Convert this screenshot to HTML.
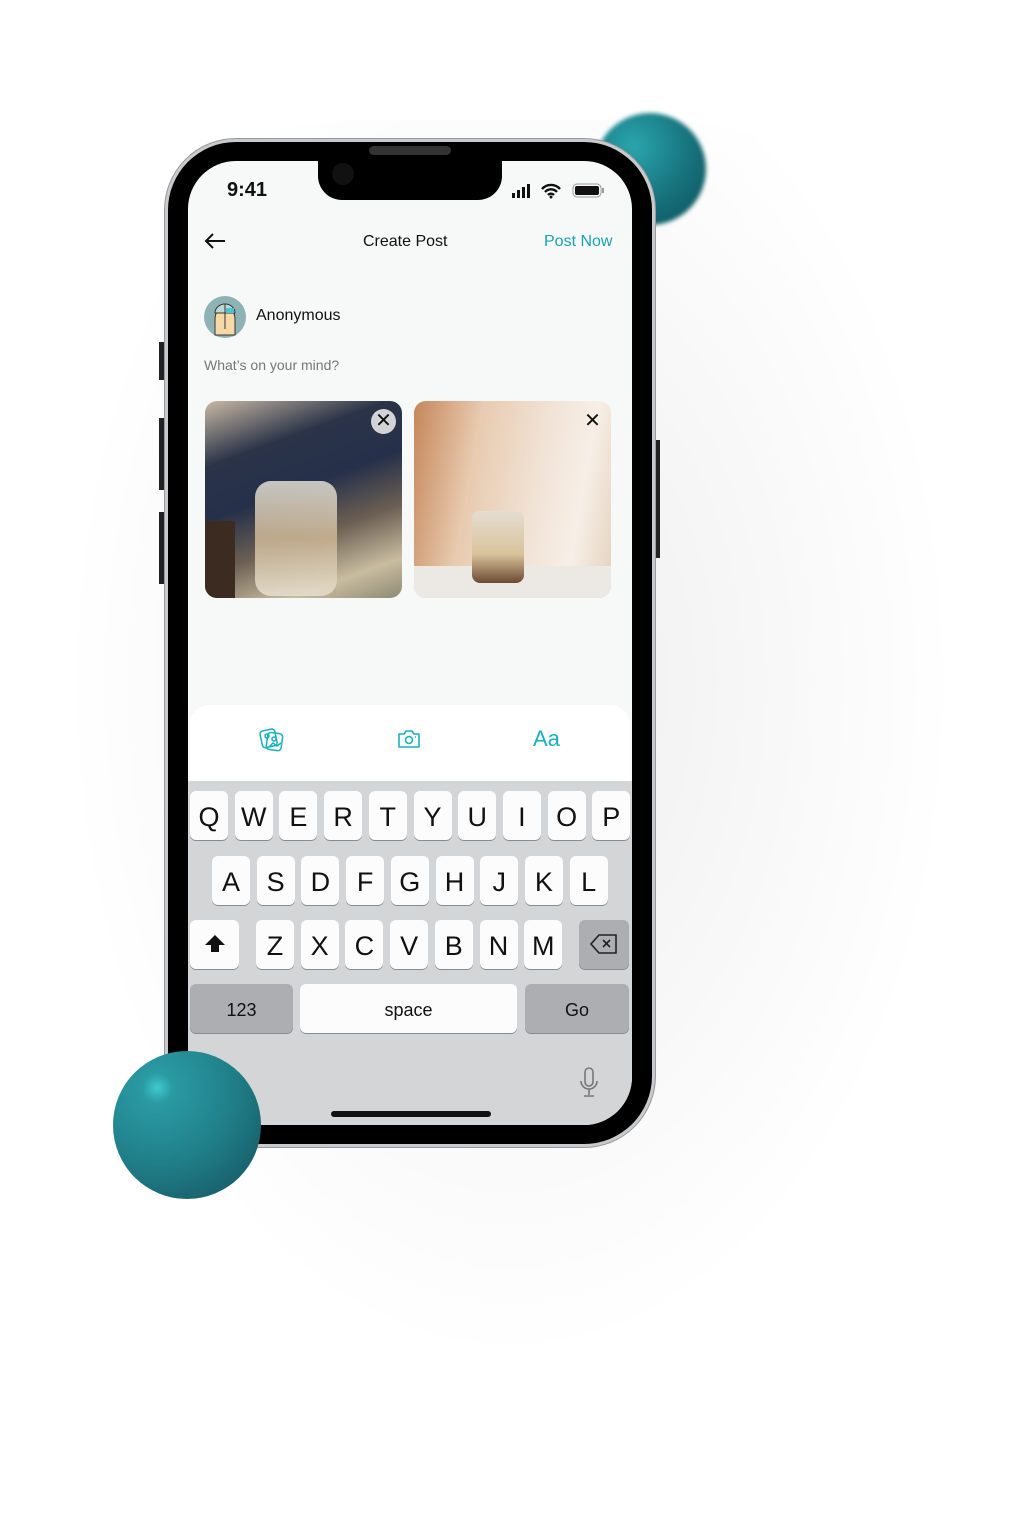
<!DOCTYPE html>
<html><head><meta charset="utf-8"><style>
*{margin:0;padding:0;box-sizing:border-box}
body{width:1020px;height:1515px;background:#fff;position:relative;overflow:hidden;font-family:"Liberation Sans",sans-serif}
.abs{position:absolute}
.shadow{left:60px;top:120px;width:900px;height:1250px;border-radius:300px;background:radial-gradient(ellipse at 50% 45%,rgba(0,0,0,0.07),rgba(0,0,0,0) 70%)}
.frame{left:164px;top:138px;width:492px;height:1010px;border-radius:72px;background:#c9cacc;border:1px solid #999}
.bezel{left:168px;top:142px;width:484px;height:1002px;border-radius:68px;background:#000}
.screen{left:188px;top:161px;width:444px;height:964px;border-radius:48px;background:#f7f9f9;overflow:hidden}
.notch{left:130px;top:-2px;width:184px;height:41px;background:#000;border-radius:0 0 24px 24px}
.key{position:absolute;width:38px;height:49px;background:#fcfcfc;border-radius:6px;box-shadow:0 1px 0 #8a8b8e;font-size:27px;color:#111;text-align:center;line-height:52px}
.gk{background:#acaeb2}
.btn{position:absolute;width:15px;background:#222}
</style></head><body>
<div class="abs shadow"></div>
<div class="abs" style="left:594px;top:113px;width:112px;height:112px;border-radius:50%;background:radial-gradient(circle at 35% 30%,#2aa5ad,#16717b 55%,#0d4f58);filter:blur(2px)"></div>
<div class="btn abs" style="left:159px;top:342px;width:6px;height:38px"></div>
<div class="btn abs" style="left:159px;top:418px;width:6px;height:72px"></div>
<div class="btn abs" style="left:159px;top:512px;width:6px;height:72px"></div>
<div class="btn abs" style="left:655px;top:440px;width:5px;height:118px"></div>
<div class="abs frame"></div>
<div class="abs bezel"></div>
<div class="abs" style="left:369px;top:146px;width:82px;height:9px;border-radius:5px;background:#333"></div>
<div class="abs screen">
  <div class="abs notch"><div class="abs" style="left:14px;top:4px;width:22px;height:22px;border-radius:50%;background:#111"></div></div>
  <div class="abs" style="left:39px;top:18px;font-size:20px;font-weight:bold;color:#111">9:41</div>
  <svg class="abs" style="left:324px;top:22px" width="95" height="16" viewBox="0 0 95 16">
    <rect x="0" y="10" width="3" height="5" fill="#111"/><rect x="5" y="7" width="3" height="8" fill="#111"/><rect x="10" y="4" width="3" height="11" fill="#111"/><rect x="15" y="1" width="3" height="14" fill="#111"/>
    <path d="M30 6a12 12 0 0 1 18 0M33 9a8 8 0 0 1 12 0M36 12a4 4 0 0 1 6 0" stroke="#111" stroke-width="2.4" fill="none"/><circle cx="39" cy="14" r="1.5" fill="#111"/>
    <rect x="61" y="1" width="28" height="13" rx="4" fill="none" stroke="#999"/><rect x="63" y="3" width="24" height="9" rx="2" fill="#111"/><rect x="90" y="5" width="2" height="5" fill="#999"/>
  </svg>
  <svg class="abs" style="left:15px;top:71px" width="24" height="18"><path d="M22 9H3M10 2L3 9l7 7" stroke="#111" stroke-width="2" fill="none"/></svg>
  <div class="abs" style="left:175px;top:72px;font-size:16px;color:#111">Create Post</div>
  <div class="abs" style="left:356px;top:72px;font-size:16px;color:#1aa3b0">Post Now</div>
  <svg class="abs" style="left:15px;top:134px" width="44" height="44" viewBox="0 0 44 44"><circle cx="22" cy="22" r="21" fill="#8fb3b5"/><path d="M12 40V24a10 12 0 0 1 20 0v16z" fill="#f7d9a8" stroke="#333"/><path d="M12 18a10 9 0 0 1 20 0z" fill="#bcd7d6" stroke="#333"/><path d="M22 9v25" stroke="#333"/><path d="M23 13h8v5h-8z" fill="#48c4d6"/></svg>
  <div class="abs" style="left:68px;top:146px;font-size:16px;color:#111">Anonymous</div>
  <div class="abs" style="left:16px;top:196px;font-size:14px;color:#777">What’s on your mind?</div>
  <div class="abs" style="left:17px;top:240px;width:197px;height:197px;border-radius:12px;overflow:hidden;background:linear-gradient(160deg,#c9b9a6 0%,#2a3347 25%,#26304a 45%,#6b5f53 65%,#c9bca0 85%,#8d8a74)">
    <div class="abs" style="left:50px;top:80px;width:82px;height:115px;border-radius:16px;background:linear-gradient(#d8d6cf,#c7b191 50%,#e4ddcc);opacity:.9"></div>
    <div class="abs" style="left:0;top:120px;width:30px;height:77px;background:#3c2b20"></div>
    <div class="abs" style="left:166px;top:8px;width:25px;height:25px;border-radius:50%;background:rgba(240,240,240,.85);font-size:20px;text-align:center;line-height:24px;color:#111">✕</div>
  </div>
  <div class="abs" style="left:226px;top:240px;width:197px;height:197px;border-radius:12px;overflow:hidden;background:linear-gradient(100deg,#c5865a 0%,#e8cbb0 30%,#f1e3d6 60%,#f7efe7 80%,#e4d1bd);">
    <div class="abs" style="left:0;top:165px;width:197px;height:32px;background:#ece8e4"></div>
    <div class="abs" style="left:58px;top:110px;width:52px;height:72px;border-radius:8px;background:linear-gradient(#e6ddd2,#d8c39b 60%,#6d4a33)"></div>
    <div class="abs" style="left:166px;top:8px;width:25px;height:25px;font-size:20px;text-align:center;line-height:24px;color:#111">✕</div>
  </div>
  <div class="abs" style="left:2px;top:544px;width:440px;height:80px;background:#fff;border-radius:20px 20px 0 0"></div>
  <svg class="abs" style="left:71px;top:566px" width="26" height="26" viewBox="0 0 26 26" fill="none" stroke="#1ab0c0" stroke-width="1.5"><rect x="2" y="3" width="15" height="17" rx="3" transform="rotate(-12 9 11)"/><rect x="8" y="6" width="15" height="17" rx="3" transform="rotate(8 15 14)"/><circle cx="8" cy="9" r="2"/><circle cx="15" cy="12" r="2"/><path d="M10 20l4-4 4 3 4-3"/></svg>
  <svg class="abs" style="left:208px;top:566px" width="26" height="24" viewBox="0 0 26 24" fill="none" stroke="#1ab0c0" stroke-width="1.6"><path d="M3 7h5l2-3h6l2 3h5v13H3z" stroke-linejoin="round"/><circle cx="13" cy="13" r="3.5"/><path d="M19 10h1"/></svg>
  <div class="abs" style="left:345px;top:565px;font-size:22px;color:#1ab0c0">Aa</div>
  <div class="abs" style="left:0;top:620px;width:444px;height:344px;background:#d4d5d7"></div>
  <div class="abs" style="left:143px;top:950px;width:160px;height:6px;border-radius:3px;background:#111"></div>
  <svg class="abs" style="left:391px;top:906px" width="20" height="32" viewBox="0 0 20 32" fill="none" stroke="#777" stroke-width="1.6"><rect x="6" y="1" width="8" height="18" rx="4"/><path d="M2 14a8 8 0 0 0 16 0M10 22v6M5 29h10"/></svg>
</div>
<div id="kb"></div>
<div class="abs" style="left:113px;top:1051px;width:148px;height:148px;border-radius:50%;background:radial-gradient(circle at 30% 25%,#3fc9cf 0,#2a9aa2 10%,#207f89 50%,#134f5c 100%)"></div>
<script>
var kb=document.getElementById('kb'),h='';
function k(x,y,t,w,c,fs){h+='<div class="key '+(c||'')+'" style="left:'+x+'px;top:'+y+'px;width:'+(w||38)+'px;'+(fs?'font-size:'+fs+'px':'')+'">'+t+'</div>';}
'QWERTYUIOP'.split('').forEach(function(c,i){k(190+i*44.7,791,c)});
'ASDFGHJKL'.split('').forEach(function(c,i){k(212+i*44.7,856,c)});
k(190,920,'<svg width="24" height="24" viewBox="0 0 24 24" style="margin-top:12px"><path d="M12 3L2 13h6v7h8v-7h6z" fill="#111"/></svg>',49);
'ZXCVBNM'.split('').forEach(function(c,i){k(256+i*44.7,920,c)});
k(579,920,'<svg width="28" height="22" viewBox="0 0 28 22" style="margin-top:13px" fill="none" stroke="#222" stroke-width="1.6"><path d="M9 2h17v18H9L1 11z"/><path d="M13 7l7 7M20 7l-7 7"/></svg>',50,'gk');
k(190,984,'123',103,'gk',18);
k(300,984,'space',217,'',18);
k(525,984,'Go',104,'gk',18);
kb.innerHTML=h;
</script>
</body></html>
